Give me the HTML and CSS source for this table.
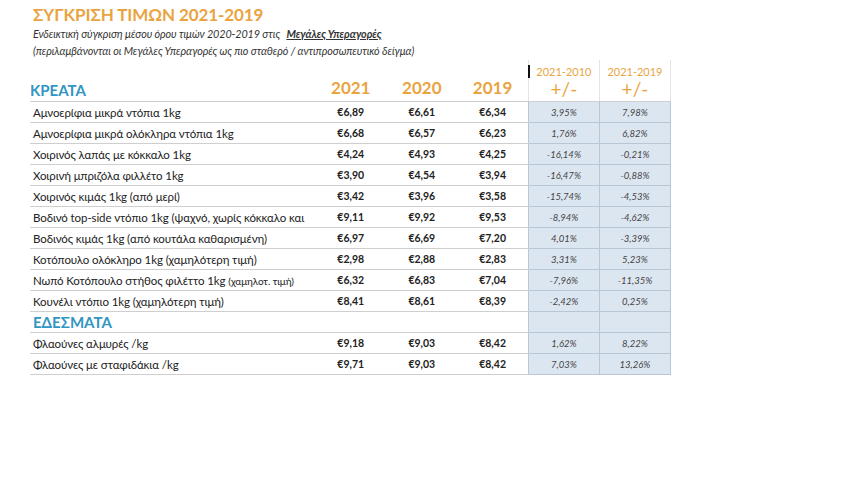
FILE: index.html
```html
<!DOCTYPE html>
<html lang="el">
<head>
<meta charset="utf-8">
<link rel="stylesheet" href="styles.css">
</head>
<body>
<div class="page">
  <h1 class="title">ΣΥΓΚΡΙΣΗ ΤΙΜΩΝ 2021-2019</h1>
  <p class="sub first">Ενδεικτική σύγκριση μέσου όρου τιμών 2020-2019 στις <b class="u">Μεγάλες Υπεραγορές</b></p>
  <p class="sub">(περιλαμβάνονται οι Μεγάλες Υπεραγορές ως πιο σταθερό / αντιπροσωπευτικό δείγμα)</p>
  <table class="tbl">
    <colgroup>
      <col class="c-label"><col class="c-year"><col class="c-year"><col class="c-year"><col class="c-pct"><col class="c-pct">
    </colgroup>
    <thead>
      <tr class="head">
        <th class="cat">ΚΡΕΑΤΑ</th>
        <th class="yr">2021</th>
        <th class="yr">2020</th>
        <th class="yr">2019</th>
        <th class="ph first"><span class="mark"></span><span class="pr">2021-2010</span><span class="pm">+/-</span></th>
        <th class="ph"><span class="pr">2021-2019</span><span class="pm">+/-</span></th>
      </tr>
    </thead>
    <tbody>
      <tr><td class="lbl">Αμνοερίφια μικρά ντόπια 1kg</td><td class="v">€6,89</td><td class="v">€6,61</td><td class="v">€6,34</td><td class="p">3,95%</td><td class="p">7,98%</td></tr>
      <tr><td class="lbl">Αμνοερίφια μικρά ολόκληρα ντόπια 1kg</td><td class="v">€6,68</td><td class="v">€6,57</td><td class="v">€6,23</td><td class="p">1,76%</td><td class="p">6,82%</td></tr>
      <tr><td class="lbl">Χοιρινός λαπάς με κόκκαλο 1kg</td><td class="v">€4,24</td><td class="v">€4,93</td><td class="v">€4,25</td><td class="p">-16,14%</td><td class="p">-0,21%</td></tr>
      <tr><td class="lbl">Χοιρινή μπριζόλα φιλλέτο 1kg</td><td class="v">€3,90</td><td class="v">€4,54</td><td class="v">€3,94</td><td class="p">-16,47%</td><td class="p">-0,88%</td></tr>
      <tr><td class="lbl">Χοιρινός κιμάς 1kg (από μερί)</td><td class="v">€3,42</td><td class="v">€3,96</td><td class="v">€3,58</td><td class="p">-15,74%</td><td class="p">-4,53%</td></tr>
      <tr><td class="lbl">Βοδινό top-side ντόπιο 1kg (ψαχνό, χωρίς κόκκαλο και</td><td class="v">€9,11</td><td class="v">€9,92</td><td class="v">€9,53</td><td class="p">-8,94%</td><td class="p">-4,62%</td></tr>
      <tr><td class="lbl">Βοδινός κιμάς 1kg (από κουτάλα καθαρισμένη)</td><td class="v">€6,97</td><td class="v">€6,69</td><td class="v">€7,20</td><td class="p">4,01%</td><td class="p">-3,39%</td></tr>
      <tr><td class="lbl">Κοτόπουλο ολόκληρο 1kg (χαμηλότερη τιμή)</td><td class="v">€2,98</td><td class="v">€2,88</td><td class="v">€2,83</td><td class="p">3,31%</td><td class="p">5,23%</td></tr>
      <tr><td class="lbl">Νωπό Κοτόπουλο στήθος φιλέττο 1kg <span class="sm">(χαμηλοτ. τιμή)</span></td><td class="v">€6,32</td><td class="v">€6,83</td><td class="v">€7,04</td><td class="p">-7,96%</td><td class="p">-11,35%</td></tr>
      <tr><td class="lbl">Κουνέλι ντόπιο 1kg (χαμηλότερη τιμή)</td><td class="v">€8,41</td><td class="v">€8,61</td><td class="v">€8,39</td><td class="p">-2,42%</td><td class="p">0,25%</td></tr>
      <tr class="sec"><td class="cat">ΕΔΕΣΜΑΤΑ</td><td></td><td></td><td></td><td class="p"></td><td class="p"></td></tr>
      <tr><td class="lbl">Φλαούνες αλμυρές /kg</td><td class="v">€9,18</td><td class="v">€9,03</td><td class="v">€8,42</td><td class="p">1,62%</td><td class="p">8,22%</td></tr>
      <tr><td class="lbl">Φλαούνες με σταφιδάκια /kg</td><td class="v">€9,71</td><td class="v">€9,03</td><td class="v">€8,42</td><td class="p">7,03%</td><td class="p">13,26%</td></tr>
    </tbody>
  </table>
</div>
</body>
</html>
```

FILE: styles.css
```css
html, body {
  margin: 0;
  padding: 0;
  background: #ffffff;
}
body {
  font-family: "Lato", "Open Sans", sans-serif;
  color: #222;
}
.page {
  padding: 4px 0 0 30px;
}
.title {
  margin: 0 0 0 3px;
  font-size: 17px;
  line-height: 22px;
  font-weight: 700;
  color: #e9a43f;
  letter-spacing: -0.1px;
}
.sub {
  margin: 0 0 0 3px;
  font-size: 10.8px;
  line-height: 17px;
  font-style: italic;
  color: #333;
  letter-spacing: -0.1px;
}
.sub.first {
  margin-top: -1px;
}
.u {
  text-decoration: underline;
  margin-left: 4px;
}
.tbl {
  margin-top: 1px;
  border-collapse: collapse;
  table-layout: fixed;
  width: 641px;
}
.c-label { width: 285px; }
.c-year { width: 71px; }
.c-pct { width: 71px; }
.head th {
  height: 38px;
  padding: 0;
  vertical-align: bottom;
  border-bottom: 1px solid #cfcfcf;
}
.cat {
  text-align: left;
  font-size: 15px;
  font-weight: 700;
  color: #3196c3;
  padding: 0 0 0 3px;
}
.head .cat { padding-bottom: 2px; }
.yr {
  font-size: 17px;
  font-weight: 700;
  color: #e9a43f;
  text-align: center;
  padding-bottom: 3px !important;
}
.ph {
  position: relative;
  text-align: center;
  color: #e9a43f;
  font-weight: 400;
  border-left: 1px solid #e4e4e4;
  border-right: 1px solid #e4e4e4;
}
.pr {
  display: block;
  font-size: 11px;
  line-height: 13px;
}
.pm {
  display: block;
  font-size: 19px;
  line-height: 21px;
  padding-bottom: 2px;
}
.mark {
  position: absolute;
  left: -1px;
  top: 5px;
  width: 2px;
  height: 13px;
  background: #111;
}
tbody td {
  height: 20px;
  padding: 0;
  border-bottom: 1px solid #cfcfcf;
  white-space: nowrap;
  overflow: hidden;
}
.lbl {
  font-size: 11.5px;
  padding-left: 3px;
  color: #222;
  letter-spacing: -0.1px;
}
.sm {
  font-size: 10px;
}
.v {
  text-align: center;
  font-size: 10.5px;
  font-weight: 700;
  color: #222;
}
.p {
  text-align: center;
  font-size: 9.5px;
  font-style: italic;
  color: #444;
  background: #dce6f1;
  border-left: 1px solid #b9c6d6;
  border-right: 1px solid #b9c6d6;
  border-bottom: 1px solid #b9c6d6;
}
```
